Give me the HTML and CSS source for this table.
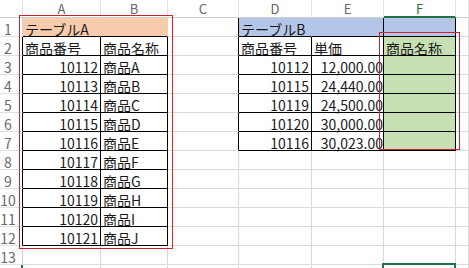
FILE: index.html
```html
<!DOCTYPE html>
<html lang="ja">
<head>
<meta charset="utf-8">
<title>Sheet</title>
<link rel="stylesheet" href="styles.css">
</head>
<body>
<div class="sheet">
  <div class="grid">
    <!-- header -->
    <div class="c hd corner"></div>
    <div class="c hd">A</div>
    <div class="c hd">B</div>
    <div class="c hd">C</div>
    <div class="c hd">D</div>
    <div class="c hd">E</div>
    <div class="c hd sel">F</div>
    <div class="c hd"></div>

    <!-- row 1 -->
    <div class="c rh">1</div>
    <div class="c or or-r bb">テーブルA</div>
    <div class="c or or-r bb"></div>
    <div class="c br"></div>
    <div class="c bl bl-r bb">テーブルB</div>
    <div class="c bl br bb"></div>
    <div class="c bl br bb"></div>
    <div class="c"></div>

    <!-- row 2 -->
    <div class="c rh rk">2</div>
    <div class="c br bb">商品番号</div>
    <div class="c br bb">商品名称</div>
    <div class="c br"></div>
    <div class="c br bb">商品番号</div>
    <div class="c br bb">単価</div>
    <div class="c gr br bb">商品名称</div>
    <div class="c"></div>

    <!-- row 3 -->
    <div class="c rh rk">3</div>
    <div class="c num br bb">10112</div>
    <div class="c br bb">商品A</div>
    <div class="c br"></div>
    <div class="c num br bb">10112</div>
    <div class="c num tight br bb">12,000.00</div>
    <div class="c gr br bb"></div>
    <div class="c"></div>

    <!-- row 4 -->
    <div class="c rh rk">4</div>
    <div class="c num br bb">10113</div>
    <div class="c br bb">商品B</div>
    <div class="c br"></div>
    <div class="c num br bb">10115</div>
    <div class="c num tight br bb">24,440.00</div>
    <div class="c gr br bb"></div>
    <div class="c"></div>

    <!-- row 5 -->
    <div class="c rh rk">5</div>
    <div class="c num br bb">10114</div>
    <div class="c br bb">商品C</div>
    <div class="c br"></div>
    <div class="c num br bb">10119</div>
    <div class="c num tight br bb">24,500.00</div>
    <div class="c gr br bb"></div>
    <div class="c"></div>

    <!-- row 6 -->
    <div class="c rh rk">6</div>
    <div class="c num br bb">10115</div>
    <div class="c br bb">商品D</div>
    <div class="c br"></div>
    <div class="c num br bb">10120</div>
    <div class="c num tight br bb">30,000.00</div>
    <div class="c gr br bb"></div>
    <div class="c"></div>

    <!-- row 7 -->
    <div class="c rh rk">7</div>
    <div class="c num br bb">10116</div>
    <div class="c br bb">商品E</div>
    <div class="c br"></div>
    <div class="c num br bb">10116</div>
    <div class="c num tight br bb">30,023.00</div>
    <div class="c gr br bb"></div>
    <div class="c"></div>

    <!-- row 8 -->
    <div class="c rh rk">8</div>
    <div class="c num br bb">10117</div>
    <div class="c br bb">商品F</div>
    <div class="c"></div>
    <div class="c"></div>
    <div class="c"></div>
    <div class="c"></div>
    <div class="c"></div>

    <!-- row 9 -->
    <div class="c rh rk">9</div>
    <div class="c num br bb">10118</div>
    <div class="c br bb">商品G</div>
    <div class="c"></div>
    <div class="c"></div>
    <div class="c"></div>
    <div class="c"></div>
    <div class="c"></div>

    <!-- row 10 -->
    <div class="c rh rk">10</div>
    <div class="c num br bb">10119</div>
    <div class="c br bb">商品H</div>
    <div class="c"></div>
    <div class="c"></div>
    <div class="c"></div>
    <div class="c"></div>
    <div class="c"></div>

    <!-- row 11 -->
    <div class="c rh rk">11</div>
    <div class="c num br bb">10120</div>
    <div class="c br bb">商品I</div>
    <div class="c"></div>
    <div class="c"></div>
    <div class="c"></div>
    <div class="c"></div>
    <div class="c"></div>

    <!-- row 12 -->
    <div class="c rh rk">12</div>
    <div class="c num br bb">10121</div>
    <div class="c br bb">商品J</div>
    <div class="c"></div>
    <div class="c"></div>
    <div class="c"></div>
    <div class="c"></div>
    <div class="c"></div>

    <!-- row 13 -->
    <div class="c rh">13</div>
    <div class="c"></div>
    <div class="c"></div>
    <div class="c"></div>
    <div class="c"></div>
    <div class="c"></div>
    <div class="c"></div>
    <div class="c"></div>

    <!-- row 14 (only its top edge is in view) -->
    <div class="c rh rsel"></div>
    <div class="c"></div>
    <div class="c"></div>
    <div class="c"></div>
    <div class="c"></div>
    <div class="c"></div>
    <div class="c"></div>
    <div class="c"></div>
  </div>

  <div class="shape shape-a"></div>
  <div class="shape shape-f"></div>
  <div class="active"></div>
</div>
</body>
</html>
```

FILE: styles.css
```css
html, body {
  margin: 0;
  padding: 0;
  background: #fff;
  overflow: hidden;
}

.sheet {
  position: relative;
  width: 469px;
  height: 268px;
  overflow: hidden;
  font-family: "Noto Sans CJK JP", "Noto Sans", sans-serif;
}

.grid {
  display: grid;
  grid-template-columns: 23px 78px 67px 71px 73px 72px 72px 1fr;
  grid-template-rows: 18px repeat(14, 19px);
}

.c {
  box-sizing: border-box;
  border-right: 1px solid #dadada;
  border-bottom: 1px solid #dadada;
  font-size: 14px;
  line-height: 22px;
  padding: 0 2px;
  color: #1a1a1a;
  white-space: nowrap;
}

.hd {
  font-size: 13px;
  line-height: 18px;
  text-align: center;
  color: #666;
  border-bottom-color: #cfcfcf;
  border-right-color: #e2e2e2;
}

.hd.sel {
  color: #217346;
  border-bottom: 2px solid #217346;
  line-height: 17px;
}

.rh {
  text-align: center;
  padding: 0 6px 0 0;
  color: #6a6a6a;
  border-right-color: #cfcfcf;
  border-bottom-color: #e2e2e2;
}

.rk {
  border-right-color: #000;
}

.rsel {
  border-right: 2px solid #217346;
}

.num {
  text-align: right;
}

.tight {
  padding-right: 0;
}

.br {
  border-right-color: #000;
}

.bb {
  border-bottom-color: #000;
}

.or {
  background: #f8cbad;
}

.or-r {
  border-right-color: #f8cbad;
}

.bl {
  background: #b4c6e7;
}

.bl-r {
  border-right-color: #b4c6e7;
}

.gr {
  background: #c6e0b4;
}

.shape {
  position: absolute;
  box-sizing: border-box;
  border: 1px solid #d0202c;
}

.shape-a {
  left: 19px;
  top: 15px;
  width: 154px;
  height: 234px;
}

.shape-f {
  left: 379px;
  top: 32px;
  width: 81px;
  height: 118px;
}

.active {
  position: absolute;
  box-sizing: border-box;
  left: 382px;
  top: 263px;
  width: 74px;
  height: 12px;
  border: 2px solid #217346;
}
```
